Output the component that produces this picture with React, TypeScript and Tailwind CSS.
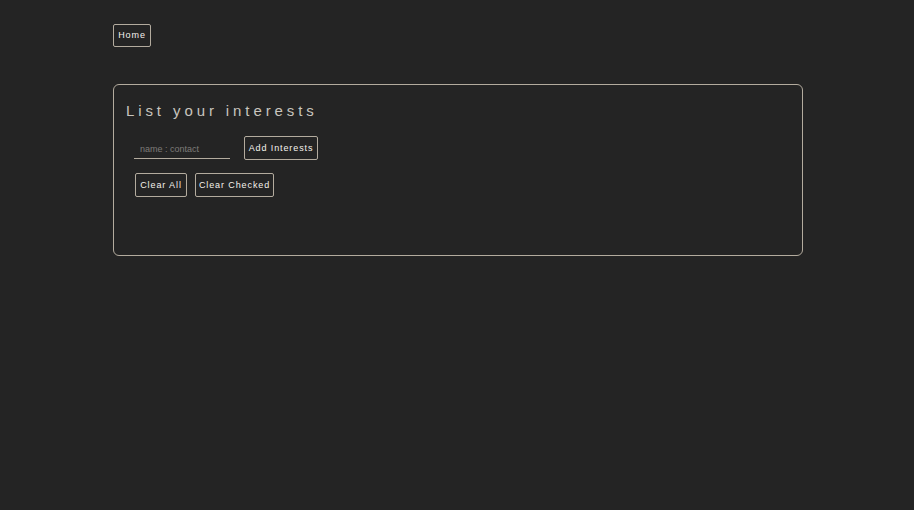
import React from "react";

const btn =
  "border border-[#b3ab9e] rounded-[2px] text-[#f5f2ec] text-[9px] font-medium tracking-[0.9px] bg-transparent leading-none";

export default function App() {
  return (
    <div
      className="min-h-screen w-full bg-[#242424] pt-[24px] pl-[113px] flex flex-col items-start"
      style={{ fontFamily: '"Liberation Sans", Arial, sans-serif' }}
    >
      <nav className="flex">
        <button className={`${btn} h-[23px] w-[38px]`}>Home</button>
      </nav>

      <div className="mt-[37px] w-[690px] h-[172px] border border-[#b3ab9e] rounded-[6px] pt-[16px] pl-[12px]">
        <h1 className="text-[15px] font-light tracking-[3.9px] text-[#c8c4be] leading-[20px]">
          List your interests
        </h1>

        <div className="flex items-center mt-[15px] pl-[8px]">
          <input
            placeholder="name : contact"
            className="w-[96px] h-[22px] bg-transparent border-b border-[#b3ab9e] px-[6px] pt-[2px] text-[9px] text-[#ddd] placeholder:text-[#7d7b78] outline-none"
          />
          <button className={`${btn} ml-[14px] h-[24px] w-[74px]`}>
            Add Interests
          </button>
        </div>

        <div className="flex gap-[8px] mt-[13px] pl-[9px]">
          <button className={`${btn} h-[24px] w-[52px]`}>Clear All</button>
          <button className={`${btn} h-[24px] w-[79px]`}>Clear Checked</button>
        </div>
      </div>
    </div>
  );
}
